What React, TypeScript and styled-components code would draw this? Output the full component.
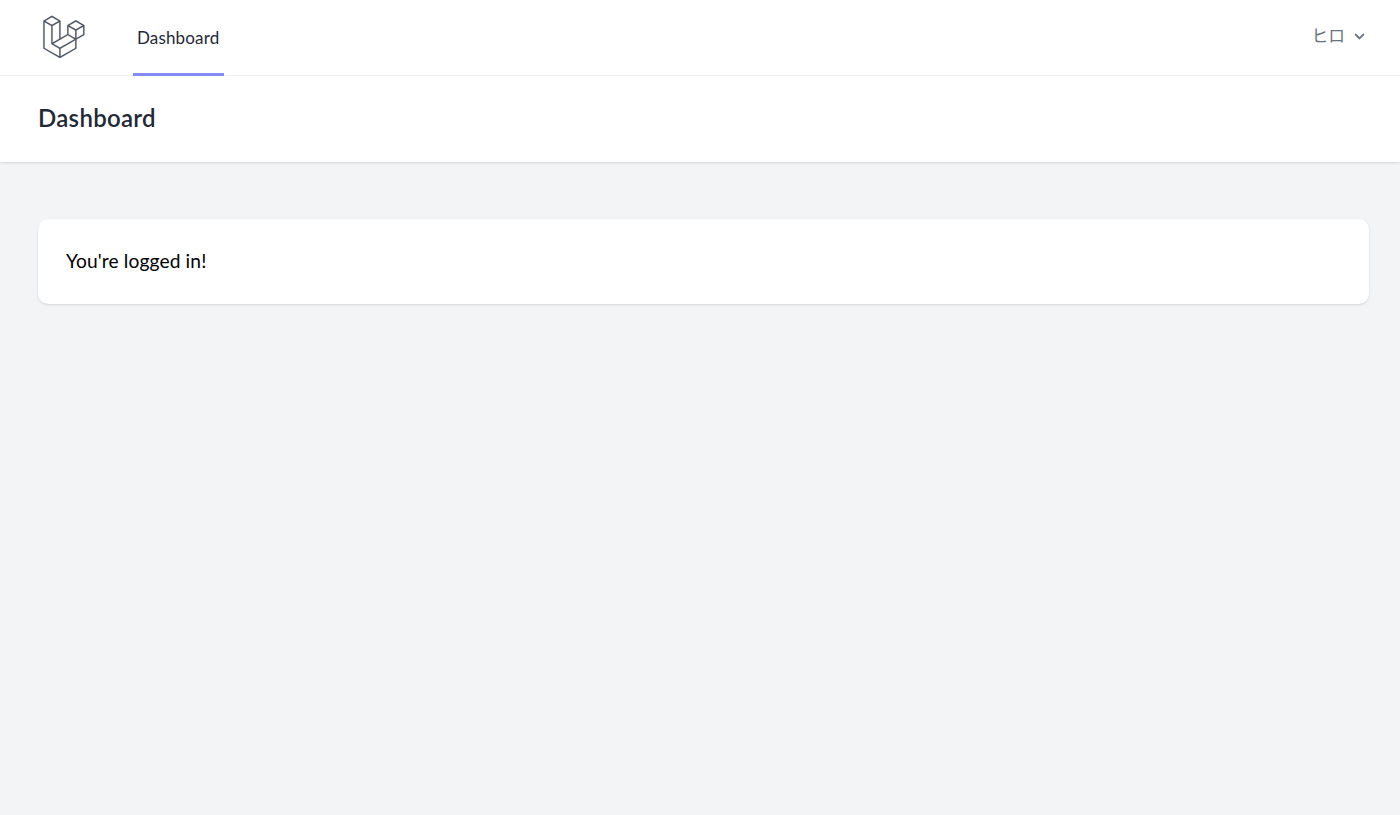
import styled, { createGlobalStyle } from 'styled-components'

const GlobalStyle = createGlobalStyle`
  html, body {
    margin: 0;
    padding: 0;
    background: #f3f4f6;
  }
  body {
    font-family: Lato, "Noto Sans", "Noto Sans CJK JP", sans-serif;
  }
`

const Page = styled.div`
  min-height: 815px;
  background: #f3f4f6;
`

const Nav = styled.nav`
  height: 75px;
  background: #ffffff;
  border-bottom: 1px solid #f3f4f6;
  display: flex;
  justify-content: space-between;
  padding: 0 31px 0 38px;
`

const NavLeft = styled.div`
  display: flex;
  align-items: stretch;
`

const LogoLink = styled.a`
  display: flex;
  align-items: center;
  width: 48px;
  padding-bottom: 1px;
  color: #4b5563;
`

const Logo = styled.svg`
  width: 48px;
  height: 48px;
  fill: currentColor;
  stroke: currentColor;
  stroke-width: 1;
`

const NavLink = styled.a`
  display: flex;
  align-items: center;
  box-sizing: border-box;
  height: 76px;
  margin-left: 47px;
  padding: 2px 5px 0 4px;
  border-bottom: 3px solid #818cf8;
  font-size: 17px;
  color: #1f2937;
  letter-spacing: 0.15px;
`

const UserButton = styled.button`
  display: flex;
  align-items: center;
  gap: 5px;
  height: 70px;
  padding: 0;
  border: none;
  background: none;
  font-family: "Noto Sans CJK JP", sans-serif;
  font-size: 16.8px;
  color: #6b7280;
`

const Chevron = styled.svg`
  width: 19px;
  height: 19px;
  fill: currentColor;
  margin-top: 2px;
`

const Header = styled.header`
  background: #ffffff;
  padding: 27px 38px 30px;
  box-shadow: 0 1px 3px 0 rgba(0, 0, 0, 0.1), 0 1px 2px -1px rgba(0, 0, 0, 0.1);
`

const Title = styled.h2`
  margin: 0;
  font-size: 24px;
  line-height: 29px;
  font-weight: 600;
  letter-spacing: 0.3px;
  color: #1f2937;
`

const Main = styled.main`
  padding: 57px 31px 0 38px;
`

const Card = styled.div`
  background: #ffffff;
  border-radius: 10px;
  padding: 27px 28px 29px;
  box-shadow: 0 1px 3px 0 rgba(0, 0, 0, 0.1), 0 1px 2px -1px rgba(0, 0, 0, 0.1);
  font-size: 19.2px;
  line-height: 29px;
  letter-spacing: 0.12px;
  color: #000000;
`

const LOGO_PATH =
  'M305.8 81.125C305.77 80.995 305.69 80.885 305.65 80.755C305.56 80.525 305.49 80.285 305.37 80.075C305.29 79.935 305.17 79.815 305.07 79.685C304.94 79.515 304.83 79.325 304.68 79.175C304.55 79.045 304.39 78.955 304.25 78.845C304.09 78.715 303.95 78.575 303.77 78.475L251.32 48.275C249.97 47.495 248.31 47.495 246.96 48.275L194.51 78.475C194.33 78.575 194.19 78.725 194.03 78.845C193.89 78.955 193.73 79.045 193.6 79.175C193.45 79.325 193.34 79.515 193.21 79.685C193.11 79.815 192.99 79.935 192.91 80.075C192.79 80.285 192.71 80.525 192.63 80.755C192.58 80.875 192.51 80.995 192.48 81.125C192.38 81.495 192.33 81.875 192.33 82.265V139.625L148.62 164.795V52.575C148.62 52.185 148.57 51.805 148.47 51.435C148.44 51.305 148.36 51.195 148.32 51.065C148.23 50.835 148.16 50.595 148.04 50.385C147.96 50.245 147.84 50.125 147.74 49.995C147.61 49.825 147.5 49.635 147.35 49.485C147.22 49.355 147.06 49.265 146.92 49.155C146.76 49.025 146.62 48.885 146.44 48.785L93.99 18.585C92.64 17.805 90.98 17.805 89.63 18.585L37.18 48.785C37 48.885 36.86 49.035 36.7 49.155C36.56 49.265 36.4 49.355 36.27 49.485C36.12 49.635 36.01 49.825 35.88 49.995C35.78 50.125 35.66 50.245 35.58 50.385C35.46 50.595 35.38 50.835 35.3 51.065C35.25 51.185 35.18 51.305 35.15 51.435C35.05 51.805 35 52.185 35 52.575V232.235C35 233.795 35.84 235.245 37.19 236.025L142.1 296.425C142.33 296.555 142.58 296.635 142.83 296.725C142.95 296.765 143.06 296.835 143.18 296.865C143.55 296.965 143.93 297.015 144.31 297.015C144.69 297.015 145.07 296.965 145.44 296.865C145.56 296.835 145.67 296.765 145.79 296.725C146.04 296.635 146.29 296.555 146.52 296.425L251.43 236.025C252.78 235.245 253.62 233.805 253.62 232.235V174.875L303.8 145.985C305.16 145.205 305.99 143.765 305.99 142.195V82.265C305.99 81.875 305.94 81.495 305.84 81.125H305.8ZM144.2 227.205L100.57 202.515L146.39 176.135L196.66 147.195L240.33 172.335L208.29 190.625L144.2 227.205ZM244.75 114.995V164.795L226.39 154.225L201.03 139.625V89.825L219.39 100.395L244.75 114.995ZM249.12 57.105L292.81 82.265L249.12 107.425L205.43 82.265L249.12 57.105ZM114.49 184.425L96.13 194.995V85.305L121.49 70.705L139.85 60.135V169.815L114.49 184.415V184.425ZM91.76 27.425L135.45 52.585L91.76 77.745L48.07 52.585L91.76 27.425ZM43.67 60.135L62.03 70.705L87.39 85.305V202.545V202.575V202.615C87.39 202.765 87.43 202.905 87.45 203.045C87.47 203.235 87.47 203.435 87.52 203.615V203.645C87.56 203.795 87.65 203.925 87.7 204.065C87.77 204.235 87.82 204.405 87.91 204.565V204.595C87.99 204.735 88.12 204.845 88.22 204.975C88.33 205.125 88.43 205.285 88.56 205.415L88.58 205.435C88.7 205.555 88.86 205.645 89 205.745C89.16 205.875 89.3 206.015 89.48 206.115C89.48 206.115 89.5 206.115 89.51 206.125C89.51 206.125 89.51 206.125 89.52 206.125L139.88 234.625V285.005L43.67 229.625V60.135ZM244.75 229.625L148.54 285.015V234.625L219.81 193.935L244.75 179.575V229.625ZM297.2 139.625L253.61 164.725V114.995L278.97 100.395L297.33 89.825V139.625H297.2Z'

export default function App() {
  return (
    <Page>
      <GlobalStyle />
      <Nav>
        <NavLeft>
          <LogoLink>
            <Logo viewBox="0 0 316 316">
              <path d={LOGO_PATH} />
            </Logo>
          </LogoLink>
          <NavLink>Dashboard</NavLink>
        </NavLeft>
        <UserButton>
          ヒロ
          <Chevron viewBox="0 0 20 20">
            <path
              fillRule="evenodd"
              clipRule="evenodd"
              d="M5.293 7.293a1 1 0 011.414 0L10 10.586l3.293-3.293a1 1 0 111.414 1.414l-4 4a1 1 0 01-1.414 0l-4-4a1 1 0 010-1.414z"
            />
          </Chevron>
        </UserButton>
      </Nav>
      <Header>
        <Title>Dashboard</Title>
      </Header>
      <Main>
        <Card>You're logged in!</Card>
      </Main>
    </Page>
  )
}
